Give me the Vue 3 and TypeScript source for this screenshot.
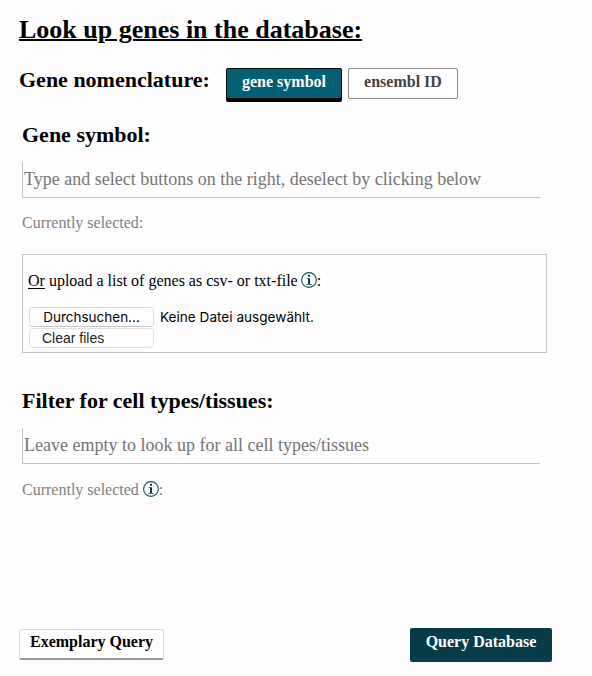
<script setup lang="ts">
import { ref } from 'vue'

type Nomenclature = 'symbol' | 'ensembl'

const nomenclature = ref<Nomenclature>('symbol')
const geneSearch = ref('')
const tissueSearch = ref('')
</script>

<template>
  <main class="page">
    <h1 class="title"><span>Look up genes in the database:</span></h1>

    <div class="nomenclature">
      <h2 class="heading nomenclature-label">Gene nomenclature:</h2>
      <button
        class="toggle toggle-symbol"
        :class="{ active: nomenclature === 'symbol' }"
        @click="nomenclature = 'symbol'"
      >gene symbol</button>
      <button
        class="toggle toggle-ensembl"
        :class="{ active: nomenclature === 'ensembl' }"
        @click="nomenclature = 'ensembl'"
      >ensembl ID</button>
    </div>

    <section class="genes">
      <h2 class="heading symbol-heading">Gene symbol:</h2>
      <input
        v-model="geneSearch"
        class="search gene-search"
        type="text"
        placeholder="Type and select buttons on the right, deselect by clicking below"
      />
      <p class="selected">Currently selected:</p>

      <div class="upload">
        <p class="upload-text">
          <span><u>Or</u> upload a list of genes as csv- or txt-file</span>
          <svg class="info" viewBox="0 0 16 16">
            <circle cx="8" cy="8" r="7.4" />
            <path d="M7 2.8h2v2H7zM5.8 6.2H9v5.7h1.6v.9H5.4v-.9H7V7.1H5.8z" />
          </svg>
          <span>:</span>
        </p>
        <div class="file-row">
          <button class="file-button">Durchsuchen...</button>
          <span class="file-status">Keine Datei ausgewählt.</span>
        </div>
        <button class="file-button clear">Clear files</button>
      </div>
    </section>

    <section class="tissues">
      <h2 class="heading filter-heading">Filter for cell types/tissues:</h2>
      <input
        v-model="tissueSearch"
        class="search tissue-search"
        type="text"
        placeholder="Leave empty to look up for all cell types/tissues"
      />
      <p class="selected tissue-selected">
        <span>Currently selected</span>
        <svg class="info" viewBox="0 0 16 16">
          <circle cx="8" cy="8" r="7.4" />
          <path d="M7 2.8h2v2H7zM5.8 6.2H9v5.7h1.6v.9H5.4v-.9H7V7.1H5.8z" />
        </svg>
        <span>:</span>
      </p>
    </section>

    <footer class="actions">
      <button class="action example">Exemplary Query</button>
      <button class="action query">Query Database</button>
    </footer>
  </main>
</template>

<style>
body {
  background: #fff;
}
</style>

<style scoped>
* {
  box-sizing: border-box;
}
.page {
  width: 592px;
  height: 676px;
  padding: 15px 0 0 19px;
  overflow: hidden;
  background: #fefefe;
  color: #000;
  font-family: "Liberation Serif", "Times New Roman", serif;
  font-size: 16px;
}
h1, h2, p {
  margin: 0;
  white-space: nowrap;
}
button, input {
  margin: 0;
  font-family: inherit;
  border-radius: 0;
  white-space: nowrap;
}
.title {
  height: 30px;
  font-size: 26px;
  line-height: 30px;
  text-decoration: underline;
  text-decoration-thickness: 2px;
}
.heading {
  height: 26px;
  font-size: 22px;
  line-height: 26px;
}
.nomenclature {
  display: flex;
  align-items: flex-start;
  height: 36px;
  margin-top: 22px;
}
.nomenclature-label {
  width: 207px;
}
.toggle {
  height: 31px;
  margin-top: 1px;
  padding: 0 0 3px;
  border: 1px solid #888;
  border-radius: 2px;
  background: #fff;
  color: #444;
  font-size: 16px;
  font-weight: bold;
  line-height: 26px;
}
.toggle.active {
  height: 34px;
  border: 1px solid #000;
  border-bottom-width: 4px;
  background: #005f73;
  color: #fff;
}
.toggle-symbol {
  width: 116px;
}
.toggle-ensembl {
  width: 110px;
  margin-left: 6px;
}
.genes, .tissues {
  padding-left: 3px;
}
.genes {
  margin-top: 19px;
}
.search {
  display: block;
  width: 518px;
  height: 36px;
  margin-top: 14px;
  padding: 0 0 1px 1px;
  border: 0;
  border-left: 1px solid #c4c4c4;
  border-bottom: 1px solid #c4c4c4;
  background: transparent;
  font-size: 18px;
  outline: none;
}
.search::placeholder {
  color: #757575;
  opacity: 1;
}
.selected {
  display: flex;
  align-items: center;
  height: 20px;
  margin-top: 15px;
  color: #808080;
  line-height: 20px;
}
.tissue-selected {
  margin-top: 16px;
}
.info {
  display: block;
  width: 16px;
  height: 16px;
  margin: -2px 0 0 4px;
}
.info circle {
  fill: none;
  stroke: #17505c;
  stroke-width: 1.1;
}
.info path {
  fill: #003e4b;
}
.upload {
  width: 525px;
  height: 99px;
  margin-top: 21px;
  padding: 16px 0 0 5px;
  border: 1px solid #c4c4c4;
}
.upload-text {
  display: flex;
  align-items: center;
  height: 20px;
  line-height: 20px;
}
.upload-text .info {
  margin-left: 3px;
}
.upload-text u {
  text-underline-offset: 2px;
}
.file-row {
  display: flex;
  align-items: center;
  height: 20px;
  margin: 16px 0 0 1px;
}
.file-button {
  display: block;
  width: 125px;
  height: 20px;
  padding: 0;
  border: 1px solid #dcdcdc;
  border-bottom-color: #c6c6c6;
  border-radius: 4px;
  background: #fff;
  color: #000;
  font-family: Inter, "Liberation Sans", sans-serif;
  font-size: 13.5px;
  line-height: 17px;
}
.file-status {
  margin-left: 6px;
  font-family: Inter, "Liberation Sans", sans-serif;
  font-size: 13.6px;
  line-height: 18px;
}
.clear {
  margin: 1px 0 0 1px;
  padding-left: 12px;
  border-color: #e0e0e0;
  color: #222;
  font-family: "Liberation Sans", Arial, sans-serif;
  font-size: 14px;
  text-align: left;
}
.tissues {
  margin-top: 35px;
}
.actions {
  display: flex;
  justify-content: space-between;
  align-items: flex-start;
  width: 533px;
  margin-top: 128px;
}
.action {
  padding: 0 0 2px;
  font-size: 16px;
  font-weight: bold;
}
.example {
  width: 145px;
  height: 31px;
  margin-top: 1px;
  padding-bottom: 4px;
  border: 1px solid #ddd;
  border-bottom: 2px solid #999;
  border-radius: 2px;
  background: #fff;
  color: #000;
}
.query {
  width: 142px;
  height: 34px;
  border: 0;
  border-bottom: 4px solid #053e58;
  border-radius: 2px;
  background: #073b47;
  color: #fff;
}
</style>
